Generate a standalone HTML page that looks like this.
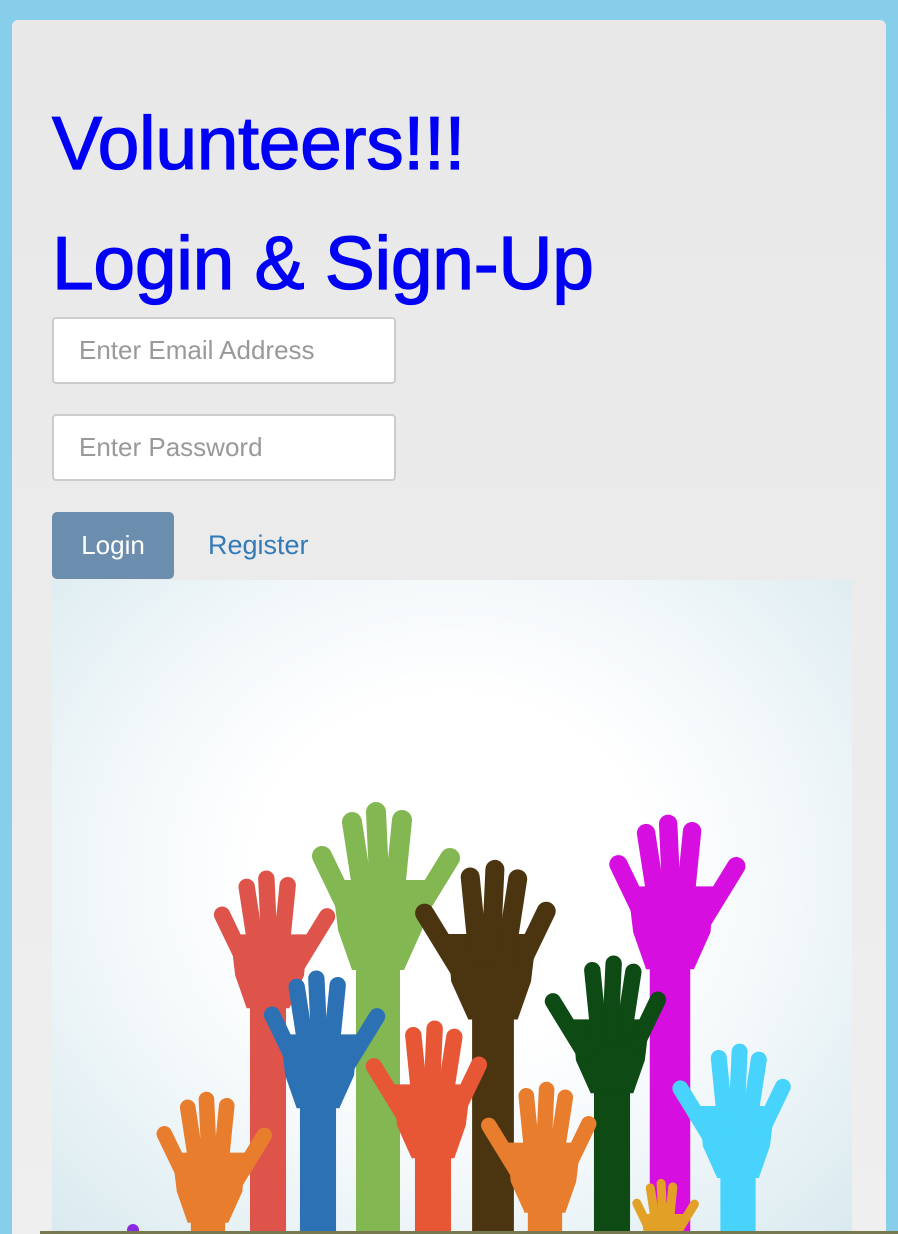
<!DOCTYPE html>
<html><head><meta charset="utf-8"><style>
html,body{margin:0;padding:0;}
body{width:898px;height:1234px;background:#87ceeb;position:relative;overflow:hidden;font-family:"Liberation Sans",Arial,sans-serif;}
.card{position:absolute;left:12px;top:20px;width:874px;height:1214px;border-radius:6px 6px 0 0;background:linear-gradient(#e8e8e8,#efefef);}
h1{position:absolute;margin:0;color:#0000f5;font-weight:normal;font-size:75px;left:52px;letter-spacing:-0.3px;-webkit-text-stroke:1.3px #0000f5;}
.in{position:absolute;left:52px;width:344px;height:67px;background:#fff;border:2px solid #ccc;border-radius:4px;box-sizing:border-box;color:#999;font-size:26px;padding-left:25px;line-height:63px;}
.btn{position:absolute;left:52px;top:512px;width:122px;height:67px;background:#6b8dae;border-radius:5px;color:#fff;font-size:26px;text-align:center;line-height:67px;}
.reg{position:absolute;left:208px;top:530px;color:#337ab7;font-size:27px;}
.img{position:absolute;left:52px;top:580px;width:800px;height:654px;background:radial-gradient(ellipse at 50% 45%,#fff 35%,#f3f8fa 60%,#d9eaef 100%);}
.strip{position:absolute;left:40px;top:1231px;width:858px;height:3px;background:#777a50;}
</style></head><body>
<div class="card"></div>
<h1 style="top:100px;">Volunteers!!!</h1>
<h1 style="top:220px;">Login &amp; Sign-Up</h1>
<div class="in" style="top:317px;">Enter Email Address</div>
<div class="in" style="top:414px;">Enter Password</div>
<div class="btn">Login</div>
<div class="reg">Register</div>
<div class="img"></div>
<svg style="position:absolute;left:0;top:0" width="898" height="1234">
<defs>
<g id="h">
<path d="M-22,-20 L22,-20 L22,600 L-22,600 Z" fill="currentColor"/>
<path d="M-46,-80 L48,-80 L44,-30 L26,10 L-26,10 L-40,-30 Z" fill="currentColor"/>
<g stroke="currentColor" stroke-width="20" stroke-linecap="round" fill="none">
<path d="M-56,-104 L-30,-50"/>
<path d="M-26,-138 L-14,-60"/>
<path d="M-2,-148 L2,-60"/>
<path d="M24,-140 L16,-60"/>
<path d="M72,-102 L34,-40"/>
</g>
</g>
<clipPath id="c"><rect x="52" y="580" width="800" height="651"/></clipPath>
</defs>
<g clip-path="url(#c)">
<use href="#h" transform="translate(268,1000) scale(0.82)" style="color:#de544a"/>
<use href="#h" transform="translate(378,960) scale(1)" style="color:#82b752"/>
<use href="#h" transform="translate(493,1010) scale(-0.95,0.95)" style="color:#4a3510"/>
<use href="#h" transform="translate(670,960) scale(0.92)" style="color:#d60fe0"/>
<use href="#h" transform="translate(318,1100) scale(0.82)" style="color:#2d71b5"/>
<use href="#h" transform="translate(612,1085) scale(-0.82,0.82)" style="color:#0d4a14"/>
<use href="#h" transform="translate(433,1150) scale(-0.82,0.82)" style="color:#e85735"/>
<use href="#h" transform="translate(208,1215) scale(0.78)" style="color:#e87d2e"/>
<use href="#h" transform="translate(545,1205) scale(-0.78,0.78)" style="color:#e87d2e"/>
<use href="#h" transform="translate(738,1170) scale(-0.8,0.8)" style="color:#47d3fc"/>
<use href="#h" transform="translate(662,1250) scale(0.45)" style="color:#e3a027"/>
<circle cx="133" cy="1230" r="6" fill="#8a2be2"/>
</g>
</svg>
<div class="strip"></div>
</body></html>
